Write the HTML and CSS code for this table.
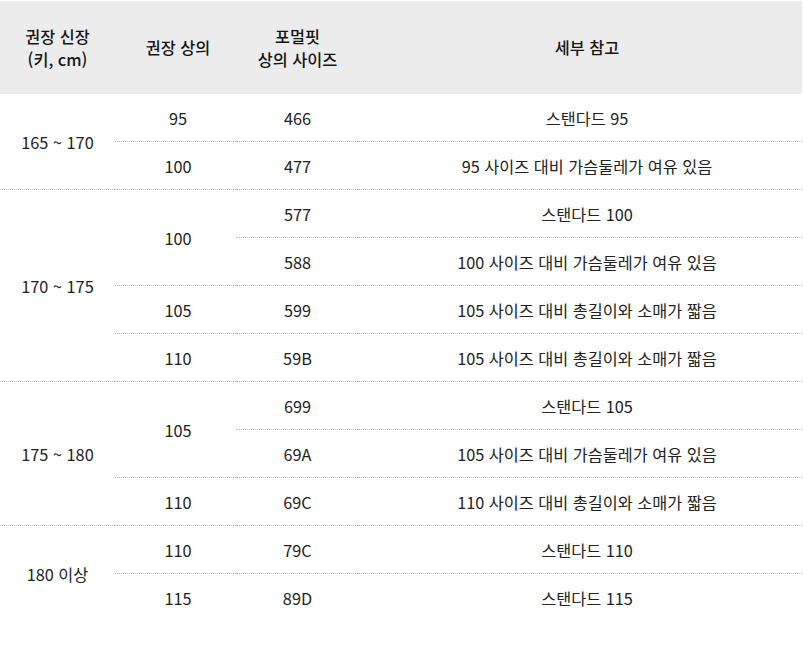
FILE: index.html
```html
<!DOCTYPE html>
<html lang="ko">
<head>
<meta charset="utf-8">
<title>사이즈 표</title>
<link rel="stylesheet" href="styles.css">
</head>
<body>
<table class="size-table">
  <colgroup>
    <col class="c1"><col class="c2"><col class="c3"><col class="c4">
  </colgroup>
  <thead>
    <tr>
      <th class="col1">권장 신장<br>(키, cm)</th>
      <th class="col2">권장 상의</th>
      <th class="col3">포멀핏<br>상의 사이즈</th>
      <th class="col4">세부 참고</th>
    </tr>
  </thead>
  <tbody>
    <tr class="first">
      <td class="col1" rowspan="2">165 ~ 170</td>
      <td class="col2">95</td>
      <td class="col3">466</td>
      <td class="col4">스탠다드 95</td>
    </tr>
    <tr>
      <td class="col2 line">100</td>
      <td class="col3 line">477</td>
      <td class="col4 line">95 사이즈 대비 가슴둘레가 여유 있음</td>
    </tr>

    <tr>
      <td class="col1 line" rowspan="4">170 ~ 175</td>
      <td class="col2 line" rowspan="2">100</td>
      <td class="col3 line">577</td>
      <td class="col4 line">스탠다드 100</td>
    </tr>
    <tr>
      <td class="col3 line">588</td>
      <td class="col4 line">100 사이즈 대비 가슴둘레가 여유 있음</td>
    </tr>
    <tr>
      <td class="col2 line">105</td>
      <td class="col3 line">599</td>
      <td class="col4 line">105 사이즈 대비 총길이와 소매가 짧음</td>
    </tr>
    <tr>
      <td class="col2 line">110</td>
      <td class="col3 line">59B</td>
      <td class="col4 line">105 사이즈 대비 총길이와 소매가 짧음</td>
    </tr>

    <tr>
      <td class="col1 line" rowspan="3">175 ~ 180</td>
      <td class="col2 line" rowspan="2">105</td>
      <td class="col3 line">699</td>
      <td class="col4 line">스탠다드 105</td>
    </tr>
    <tr>
      <td class="col3 line">69A</td>
      <td class="col4 line">105 사이즈 대비 가슴둘레가 여유 있음</td>
    </tr>
    <tr>
      <td class="col2 line">110</td>
      <td class="col3 line">69C</td>
      <td class="col4 line">110 사이즈 대비 총길이와 소매가 짧음</td>
    </tr>

    <tr>
      <td class="col1 line" rowspan="2">180 이상</td>
      <td class="col2 line">110</td>
      <td class="col3 line">79C</td>
      <td class="col4 line">스탠다드 110</td>
    </tr>
    <tr>
      <td class="col2 line">115</td>
      <td class="col3 line">89D</td>
      <td class="col4 line">스탠다드 115</td>
    </tr>
  </tbody>
</table>
</body>
</html>
```

FILE: styles.css
```css
html, body {
  margin: 0;
  padding: 0;
  background: #ffffff;
}

body {
  padding-top: 1px;
  font-family: "Noto Sans CJK KR", "Noto Sans", sans-serif;
  font-size: 16.3px;
  color: #222222;
}

.size-table {
  width: 802px;
  border-collapse: collapse;
  table-layout: fixed;
}

.c1 { width: 115px; }
.c2 { width: 121px; }
.c3 { width: 122px; }
.c4 { width: 444px; }

.size-table th {
  background: #ececec;
  height: 93px;
  padding: 0;
  font-weight: 500;
  line-height: 23px;
  color: #151515;
  text-align: center;
  vertical-align: middle;
}

.size-table td {
  height: 47px;
  padding: 0;
  line-height: 20px;
  text-align: center;
  vertical-align: middle;
}

.size-table .line {
  border-top: 1px dotted #b8b8b8;
}

.size-table .col2 {
  padding-left: 5px;
}

.size-table .col3 {
  padding-left: 1px;
}

.size-table .col4 {
  padding-left: 14px;
}
```
